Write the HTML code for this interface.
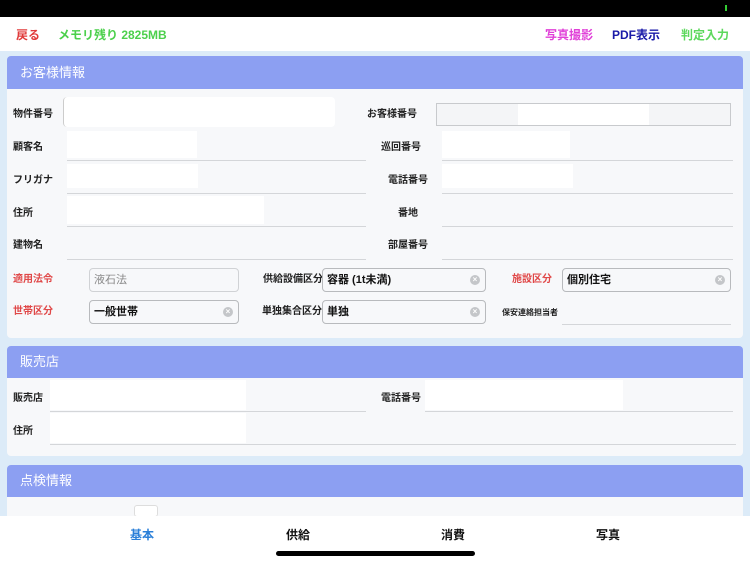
<!DOCTYPE html><html><head><meta charset="utf-8"><style>
*{margin:0;padding:0;box-sizing:border-box}
body{width:750px;height:562px;overflow:hidden;background:#dcebf8;font-family:"Liberation Sans","Noto Sans CJK JP",sans-serif;position:relative}
.a{position:absolute}
.l{position:absolute;font-size:10px;font-weight:bold;color:#222;line-height:12px}
.r{color:#e04848}
.u{position:absolute;height:1px;background:#d4d6d9}
.w{position:absolute;background:#fff}
.hd{position:absolute;left:7px;width:736px;background:#8c9ff2;color:#fff;font-size:13px;padding-left:13px;border-radius:4px 4px 0 0}
.bd{position:absolute;left:7px;width:736px;background:#f7f8fa}
.box{position:absolute;height:24px;border:1px solid #b8babd;border-radius:4px;background:#f7f8fa;font-size:11px;font-weight:bold;line-height:22px;padding-left:4px;color:#111}
.x{position:absolute;right:5px;top:6px;width:10px;height:10px;border-radius:50%;background:#c4c6c9;color:#fff;font-size:8px;line-height:10px;text-align:center}
.t{position:absolute;top:526px;font-size:12px;font-weight:bold;color:#111}
.tb{position:absolute;top:26px;font-size:12px;font-weight:bold}
</style></head><body>
<div class="a" style="left:0;top:0;width:750px;height:17px;background:#000"></div>
<div class="a" style="left:725px;top:5px;width:2px;height:6px;background:#3c3"></div>
<div class="a" style="left:0;top:17px;width:750px;height:34px;background:#fff"></div>
<div class="tb" style="left:16px;color:#e03a3a">戻る</div>
<div class="tb" style="left:58px;color:#4cd04c">メモリ残り 2825MB</div>
<div class="tb" style="left:545px;color:#e040d8">写真撮影</div>
<div class="tb" style="left:612px;color:#1a1aa8">PDF表示</div>
<div class="tb" style="left:681px;color:#5cd85c">判定入力</div>

<div class="hd" style="top:56px;height:33px;line-height:33px">お客様情報</div>
<div class="bd" style="top:89px;height:249px;border-radius:0 0 4px 4px"></div>
<div class="w" style="left:63px;top:97px;width:272px;height:30px;border-left:1px solid #ccc;border-radius:4px"></div>
<div class="l" style="left:13px;top:109px">物件番号</div>
<div class="l" style="left:367px;top:109px">お客様番号</div>
<div class="a" style="left:436px;top:103px;width:295px;height:23px;border:1px solid #c8cacd;background:#f4f5f7"></div>
<div class="w" style="left:518px;top:104px;width:131px;height:21px"></div>

<div class="l" style="left:13px;top:142px">顧客名</div><div class="w" style="left:67px;top:131px;width:130px;height:27px"></div><div class="u" style="left:67px;top:160px;width:299px"></div>
<div class="l" style="left:381px;top:142px">巡回番号</div><div class="w" style="left:442px;top:131px;width:128px;height:27px"></div><div class="u" style="left:442px;top:160px;width:291px"></div>
<div class="l" style="left:13px;top:175px">フリガナ</div><div class="w" style="left:67px;top:164px;width:131px;height:24px"></div><div class="u" style="left:67px;top:193px;width:299px"></div>
<div class="l" style="left:388px;top:175px">電話番号</div><div class="w" style="left:442px;top:164px;width:131px;height:24px"></div><div class="u" style="left:442px;top:193px;width:291px"></div>
<div class="l" style="left:13px;top:208px">住所</div><div class="w" style="left:67px;top:196px;width:197px;height:28px"></div><div class="u" style="left:67px;top:226px;width:299px"></div>
<div class="l" style="left:398px;top:208px">番地</div><div class="u" style="left:442px;top:226px;width:291px"></div>
<div class="l" style="left:13px;top:240px">建物名</div><div class="u" style="left:67px;top:259px;width:299px"></div>
<div class="l" style="left:388px;top:240px">部屋番号</div><div class="u" style="left:442px;top:259px;width:291px"></div>

<div class="l r" style="left:13px;top:274px">適用法令</div>
<div class="box" style="left:89px;top:268px;width:150px;color:#888;font-weight:normal;border-color:#d0d2d5">液石法</div>
<div class="l" style="left:263px;top:274px">供給設備区分</div>
<div class="box" style="left:322px;top:268px;width:164px">容器 (1t未満)<span class="x">×</span></div>
<div class="l r" style="left:512px;top:274px">施設区分</div>
<div class="box" style="left:562px;top:268px;width:169px">個別住宅<span class="x">×</span></div>
<div class="l r" style="left:13px;top:306px">世帯区分</div>
<div class="box" style="left:89px;top:300px;width:150px">一般世帯<span class="x">×</span></div>
<div class="l" style="left:262px;top:306px">単独集合区分</div>
<div class="box" style="left:322px;top:300px;width:164px">単独<span class="x">×</span></div>
<div class="l" style="left:502px;top:307px;font-size:8px">保安連絡担当者</div>
<div class="u" style="left:562px;top:324px;width:169px"></div>

<div class="hd" style="top:346px;height:32px;line-height:32px">販売店</div>
<div class="bd" style="top:378px;height:78px;border-radius:0 0 4px 4px"></div>
<div class="l" style="left:13px;top:393px">販売店</div><div class="w" style="left:50px;top:380px;width:196px;height:30px"></div><div class="u" style="left:50px;top:411px;width:316px"></div>
<div class="l" style="left:381px;top:393px">電話番号</div><div class="w" style="left:425px;top:380px;width:198px;height:30px"></div><div class="u" style="left:425px;top:411px;width:308px"></div>
<div class="l" style="left:13px;top:426px">住所</div><div class="w" style="left:50px;top:413px;width:196px;height:30px"></div><div class="u" style="left:50px;top:444px;width:686px"></div>

<div class="hd" style="top:465px;height:32px;line-height:32px">点検情報</div>
<div class="bd" style="top:497px;height:20px"></div>
<div class="w" style="left:134px;top:505px;width:24px;height:12px;border:1px solid #ddd;border-radius:3px"></div>
<div class="a" style="left:0;top:516px;width:750px;height:46px;background:#fff"></div>
<div class="t" style="left:130px;color:#2a7fd8">基本</div>
<div class="t" style="left:286px">供給</div>
<div class="t" style="left:441px">消費</div>
<div class="t" style="left:596px">写真</div>
<div class="a" style="left:276px;top:551px;width:199px;height:5px;border-radius:3px;background:#000"></div>
</body></html>
